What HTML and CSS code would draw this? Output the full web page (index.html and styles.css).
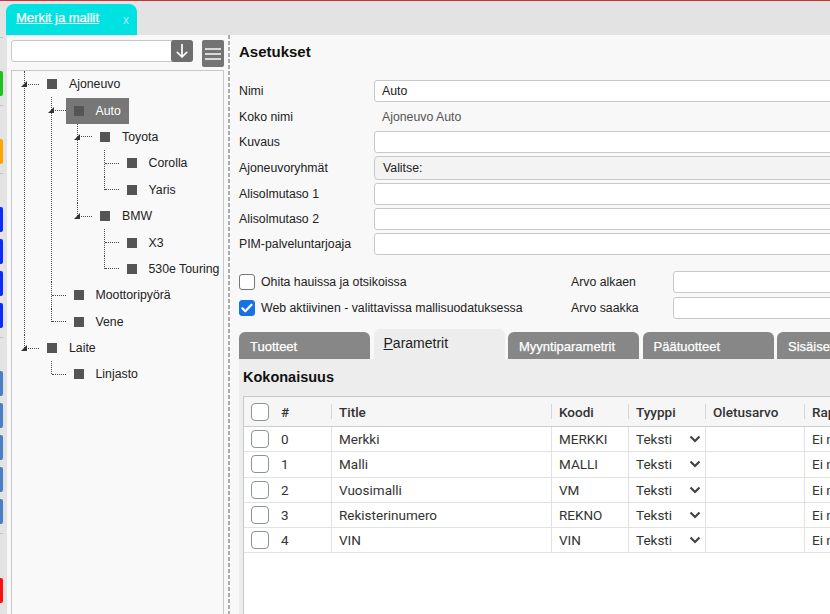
FILE: index.html
```html
<!DOCTYPE html>
<html lang="fi">
<head>
<meta charset="utf-8">
<title>Merkit ja mallit</title>
<link rel="stylesheet" href="styles.css">
</head>
<body>
<div class="app">
  <header class="topbar">
    <div class="doc-tab">
      <a class="doc-tab-title" href="#">Merkit ja mallit</a>
      <span class="doc-tab-close">x</span>
    </div>
  </header>
  <div class="main">
    <nav class="rail">
      <span class="tick first"></span>
      <span class="mark lead green"></span>
      <span class="tick"></span>
      <span class="mark lead orange"></span>
      <span class="tick"></span>
      <span class="mark lead blue"></span>
      <span class="mark blue"></span>
      <span class="mark blue"></span>
      <span class="mark blue"></span>
      <span class="tick"></span>
      <span class="mark lead steel"></span>
      <span class="mark steel"></span>
      <span class="mark steel"></span>
      <span class="mark steel"></span>
      <span class="mark steel"></span>
      <span class="tick"></span>
      <span class="mark far red"></span>
    </nav>
    <aside class="left">
      <div class="search-row">
        <div class="search">
          <span class="search-btn">
            <svg width="22" height="22" viewBox="0 0 22 22"><path d="M11 4.5V17M6.3 12.3L11 17l4.7-4.7" fill="none" stroke="#fff" stroke-width="1.7" stroke-linecap="round" stroke-linejoin="round"/></svg>
          </span>
        </div>
        <span class="menu-btn">
          <svg width="22" height="27" viewBox="0 0 22 27"><rect x="3" y="8" width="16" height="2" fill="#d9d9d9"/><rect x="3" y="13" width="16" height="2" fill="#d9d9d9"/><rect x="3" y="18" width="16" height="2" fill="#d9d9d9"/></svg>
        </span>
      </div>
      <div class="treebox">
        <ul class="tree">
          <li>
            <div class="node-row"><span class="toggle"></span><span class="anchor"><i class="ico"></i>Ajoneuvo</span></div>
            <ul>
              <li>
                <div class="node-row"><span class="toggle"></span><span class="anchor sel"><i class="ico"></i>Auto</span></div>
                <ul>
                  <li>
                    <div class="node-row"><span class="toggle"></span><span class="anchor"><i class="ico"></i>Toyota</span></div>
                    <ul>
                      <li><div class="node-row"><span class="anchor"><i class="ico"></i>Corolla</span></div></li>
                      <li><div class="node-row"><span class="anchor"><i class="ico"></i>Yaris</span></div></li>
                    </ul>
                  </li>
                  <li>
                    <div class="node-row"><span class="toggle"></span><span class="anchor"><i class="ico"></i>BMW</span></div>
                    <ul>
                      <li><div class="node-row"><span class="anchor"><i class="ico"></i>X3</span></div></li>
                      <li><div class="node-row"><span class="anchor"><i class="ico"></i>530e Touring</span></div></li>
                    </ul>
                  </li>
                </ul>
              </li>
              <li><div class="node-row"><span class="anchor"><i class="ico"></i>Moottoripyörä</span></div></li>
              <li><div class="node-row"><span class="anchor"><i class="ico"></i>Vene</span></div></li>
            </ul>
          </li>
          <li>
            <div class="node-row"><span class="toggle"></span><span class="anchor"><i class="ico"></i>Laite</span></div>
            <ul>
              <li><div class="node-row"><span class="anchor"><i class="ico"></i>Linjasto</span></div></li>
            </ul>
          </li>
        </ul>
      </div>
    </aside>
    <div class="divider"></div>
    <section class="content">
      <h2 class="title">Asetukset</h2>
      <div class="form">
        <label class="lbl">Nimi</label>
        <div class="field">Auto</div>
        <label class="lbl">Koko nimi</label>
        <div class="static">Ajoneuvo Auto</div>
        <label class="lbl">Kuvaus</label>
        <div class="field"></div>
        <label class="lbl">Ajoneuvoryhmät</label>
        <div class="field select">Valitse:</div>
        <label class="lbl">Alisolmutaso 1</label>
        <div class="field"></div>
        <label class="lbl">Alisolmutaso 2</label>
        <div class="field"></div>
        <label class="lbl">PIM-palveluntarjoaja</label>
        <div class="field"></div>
      </div>
      <div class="flags">
        <div class="check"><span class="box"></span>Ohita hauissa ja otsikoissa</div>
        <label class="lbl">Arvo alkaen</label>
        <div class="field"></div>
        <div class="check"><span class="box on"><svg width="16" height="16" viewBox="0 0 16 16"><path d="M3.3 8.3l3 3 6.2-6.6" fill="none" stroke="#fff" stroke-width="2.2" stroke-linecap="round" stroke-linejoin="round"/></svg></span>Web aktiivinen - valittavissa mallisuodatuksessa</div>
        <label class="lbl">Arvo saakka</label>
        <div class="field"></div>
      </div>
      <div class="tabs">
        <span class="tab">Tuotteet</span>
        <span class="tab active"><u>P</u>arametrit</span>
        <span class="tab">Myyntiparametrit</span>
        <span class="tab">Päätuotteet</span>
        <span class="tab">Sisäiset tiedot</span>
      </div>
      <div class="panel">
        <h3 class="panel-title">Kokonaisuus</h3>
        <div class="grid">
          <div class="grow head">
            <div class="cell"><span class="cb"></span></div>
            <div class="cell">#</div>
            <div class="cell sep">Title</div>
            <div class="cell sep">Koodi</div>
            <div class="cell sep">Tyyppi</div>
            <div class="cell sep">Oletusarvo</div>
            <div class="cell sep">Raportointi</div>
          </div>
          <div class="grow">
            <div class="cell"><span class="cb"></span></div>
            <div class="cell">0</div>
            <div class="cell line">Merkki</div>
            <div class="cell line">MERKKI</div>
            <div class="cell line type">Teksti<svg class="chev" width="12" height="8" viewBox="0 0 12 8"><path d="M1.5 1.5L6 6l4.5-4.5" fill="none" stroke="#444" stroke-width="2.2"/></svg></div>
            <div class="cell line"></div>
            <div class="cell line">Ei näytetä</div>
          </div>
          <div class="grow">
            <div class="cell"><span class="cb"></span></div>
            <div class="cell">1</div>
            <div class="cell line">Malli</div>
            <div class="cell line">MALLI</div>
            <div class="cell line type">Teksti<svg class="chev" width="12" height="8" viewBox="0 0 12 8"><path d="M1.5 1.5L6 6l4.5-4.5" fill="none" stroke="#444" stroke-width="2.2"/></svg></div>
            <div class="cell line"></div>
            <div class="cell line">Ei näytetä</div>
          </div>
          <div class="grow">
            <div class="cell"><span class="cb"></span></div>
            <div class="cell">2</div>
            <div class="cell line">Vuosimalli</div>
            <div class="cell line">VM</div>
            <div class="cell line type">Teksti<svg class="chev" width="12" height="8" viewBox="0 0 12 8"><path d="M1.5 1.5L6 6l4.5-4.5" fill="none" stroke="#444" stroke-width="2.2"/></svg></div>
            <div class="cell line"></div>
            <div class="cell line">Ei näytetä</div>
          </div>
          <div class="grow">
            <div class="cell"><span class="cb"></span></div>
            <div class="cell">3</div>
            <div class="cell line">Rekisterinumero</div>
            <div class="cell line">REKNO</div>
            <div class="cell line type">Teksti<svg class="chev" width="12" height="8" viewBox="0 0 12 8"><path d="M1.5 1.5L6 6l4.5-4.5" fill="none" stroke="#444" stroke-width="2.2"/></svg></div>
            <div class="cell line"></div>
            <div class="cell line">Ei näytetä</div>
          </div>
          <div class="grow">
            <div class="cell"><span class="cb"></span></div>
            <div class="cell">4</div>
            <div class="cell line">VIN</div>
            <div class="cell line">VIN</div>
            <div class="cell line type">Teksti<svg class="chev" width="12" height="8" viewBox="0 0 12 8"><path d="M1.5 1.5L6 6l4.5-4.5" fill="none" stroke="#444" stroke-width="2.2"/></svg></div>
            <div class="cell line"></div>
            <div class="cell line">Ei näytetä</div>
          </div>
        </div>
      </div>
    </section>
  </div>
</div>
</body>
</html>
```
FILE: styles.css
```css
* { box-sizing: border-box; }
html, body { margin: 0; padding: 0; }
body {
  font-family: "Liberation Sans", Arial, sans-serif;
  font-size: 12.3px;
  color: #222;
  background: #f8f8f8;
}
.app {
  width: 830px;
  height: 614px;
  overflow: hidden;
  display: flex;
  flex-direction: column;
  background: #f8f8f8;
}

/* top bar */
.topbar {
  flex: none;
  height: 35px;
  border-top: 1px solid #c93434;
  background: #e3e3e3;
  display: flex;
  align-items: flex-end;
  padding-left: 6px;
}
.doc-tab {
  width: 131px;
  height: 31px;
  background: #00e1e1;
  border-radius: 8px 8px 0 0;
  display: flex;
  align-items: flex-start;
  justify-content: space-between;
  padding: 6px 8px 0 10px;
}
.doc-tab-title {
  color: #fff;
  font-size: 13px;
  line-height: 16px;
  text-decoration: underline;
  -webkit-text-stroke: 0.25px #fff;
}
.doc-tab-close {
  color: #a9f1f1;
  font-size: 12px;
  line-height: 16px;
  padding-top: 2px;
}

.main {
  flex: 1;
  display: flex;
  min-height: 0;
}

/* left rail */
.rail {
  flex: none;
  width: 7px;
  background: #e3e3e3;
  display: flex;
  flex-direction: column;
}
.tick {
  flex: none;
  width: 3px;
  height: 1px;
  background: #c2c2c2;
  margin-top: 9px;
}
.tick.first { margin-top: 2px; }
.mark {
  flex: none;
  width: 3px;
  height: 25px;
  border-radius: 0 2px 2px 0;
  margin-top: 7px;
}
.mark.lead { margin-top: 33px; }
.mark.far { margin-top: 44px; }
.green { background: #1fc21f; }
.orange { background: #ffa500; }
.blue { background: #0a2cff; }
.steel { background: #4a7fc6; }
.red { background: #ff1010; }

/* left panel */
.left {
  flex: none;
  width: 221px;
  padding: 5px 4px 0;
  display: flex;
  flex-direction: column;
}
.search-row {
  display: flex;
  gap: 9px;
  align-items: flex-start;
}
.search {
  width: 182px;
  height: 22px;
  border: 1px solid #c8c8c8;
  border-radius: 3px;
  background: #fff;
  display: flex;
  justify-content: flex-end;
}
.search-btn {
  width: 22px;
  height: 22px;
  margin: -1px;
  background: #6e6e6e;
  border-radius: 3px;
  display: flex;
}
.menu-btn {
  width: 22px;
  height: 27px;
  background: #747474;
  border-radius: 2px;
  display: flex;
}
.treebox {
  margin-top: 3px;
  height: 560px;
  flex: none;
  border: 1px solid #c8c8c8;
  background: #f9f9f9;
}

/* tree */
.tree, .tree ul {
  list-style: none;
  margin: 0;
  padding: 0;
}
.tree { padding-left: 9px; }
.tree ul { padding-left: 26.5px; }
.tree li { position: relative; }
.tree li::before {
  content: "";
  position: absolute;
  left: 3px;
  top: 0;
  bottom: 0;
  border-left: 1px dotted #4a4a4a;
}
.tree li:last-child::before {
  bottom: auto;
  height: 13px;
}
.node-row {
  position: relative;
  height: 26.4px;
  display: flex;
  align-items: center;
}
.node-row::before {
  content: "";
  flex: none;
  width: 14px;
  margin-left: 4px;
  border-top: 1px dotted #4a4a4a;
}
.toggle {
  position: absolute;
  left: 0;
  top: 10px;
  width: 0;
  height: 0;
  border-left: 6px solid transparent;
  border-bottom: 6px solid #333;
}
.anchor {
  display: flex;
  align-items: center;
  height: 26px;
  padding: 0 8px;
  white-space: nowrap;
}
.anchor .ico {
  flex: none;
  width: 10px;
  height: 10px;
  background: #555;
  margin-right: 12px;
}
.anchor.sel {
  background: #777;
  color: #fff;
}

/* divider */
.divider {
  flex: none;
  width: 2px;
  background: repeating-linear-gradient(to bottom, #adadad 0 4px, transparent 4px 6px);
}

/* content */
.content {
  flex: none;
  width: 700px;
  padding-left: 9px;
  display: flex;
  flex-direction: column;
}
.title {
  margin: 8px 0 0;
  font-size: 15px;
  line-height: 18px;
  font-weight: bold;
  color: #111;
}
.form {
  margin-top: 19px;
  display: grid;
  grid-template-columns: 135px 1fr;
  row-gap: 3px;
  align-items: center;
}
.lbl { white-space: nowrap; }
.field {
  height: 22px;
  border: 1px solid #c8c8c8;
  border-radius: 3px;
  background: #fff;
  padding: 0 7px;
  display: flex;
  align-items: center;
}
.field.select {
  height: 24px;
  background: #f3f3f3;
  border-radius: 4px;
  padding-left: 8px;
}
.static {
  height: 23px;
  display: flex;
  align-items: center;
  padding-left: 8px;
  color: #555;
}
.flags {
  margin-top: 16px;
  display: grid;
  grid-template-columns: 332px 102px 1fr;
  grid-template-rows: 22px 22px;
  row-gap: 4px;
  align-items: center;
}
.check {
  display: flex;
  align-items: center;
  gap: 6px;
  white-space: nowrap;
}
.box {
  flex: none;
  width: 16px;
  height: 16px;
  border: 1px solid #767676;
  border-radius: 3px;
  background: #fff;
  display: flex;
}
.box.on {
  background: #1673e6;
  border-color: #1673e6;
}
.box.on svg { margin: -1px; }

/* tabs */
.tabs {
  margin-top: 10px;
  height: 30px;
  display: flex;
  align-items: flex-end;
  gap: 3.5px;
}
.tab {
  flex: none;
  width: 131px;
  height: 27px;
  background: #878787;
  color: #fff;
  border-radius: 6px 6px 0 0;
  padding: 7px 0 0 11px;
  font-size: 13px;
  line-height: 16px;
  white-space: nowrap;
  overflow: hidden;
  -webkit-text-stroke: 0.25px #fff;
}
.tab.active {
  height: 30px;
  background: #ededed;
  color: #222;
  font-size: 14px;
  padding: 6px 0 0 10px;
  -webkit-text-stroke: 0;
}
.panel {
  flex: 1;
  background: #ededed;
  padding: 9px 0 0 4px;
}
.panel-title {
  margin: 0 0 10px;
  font-size: 14.5px;
  line-height: 18px;
  font-weight: bold;
  color: #111;
}

/* grid */
.grid {
  height: 300px;
  background: #fff;
  border-left: 1px solid #c8c8c8;
  border-top: 1px solid #c8c8c8;
  font-family: Roboto, "Liberation Sans", sans-serif;
  font-size: 13.5px;
  color: #333;
}
.grow {
  display: grid;
  grid-template-columns: 30px 57px 220px 77px 77px 99px 140px;
  height: 25.3px;
  border-bottom: 1px solid #e2e2e2;
}
.grow.head {
  height: 30px;
  background: #f6f6f6;
  border-bottom: 1px solid #cdcdcd;
  font-weight: 500;
}
.cell {
  display: flex;
  align-items: center;
  padding: 0 7px;
  white-space: nowrap;
  overflow: hidden;
}
.cell.line { border-left: 1px solid #e2e2e2; }
.cell.sep {
  padding-left: 8px;
  background: linear-gradient(#d6d6d6, #d6d6d6) no-repeat 0 50% / 1px 15px;
}
.cell.type {
  justify-content: space-between;
  padding-right: 4px;
}
.cb {
  flex: none;
  width: 18px;
  height: 18px;
  border: 1.5px solid #8a9595;
  border-radius: 4px;
  background: #fff;
}
```
